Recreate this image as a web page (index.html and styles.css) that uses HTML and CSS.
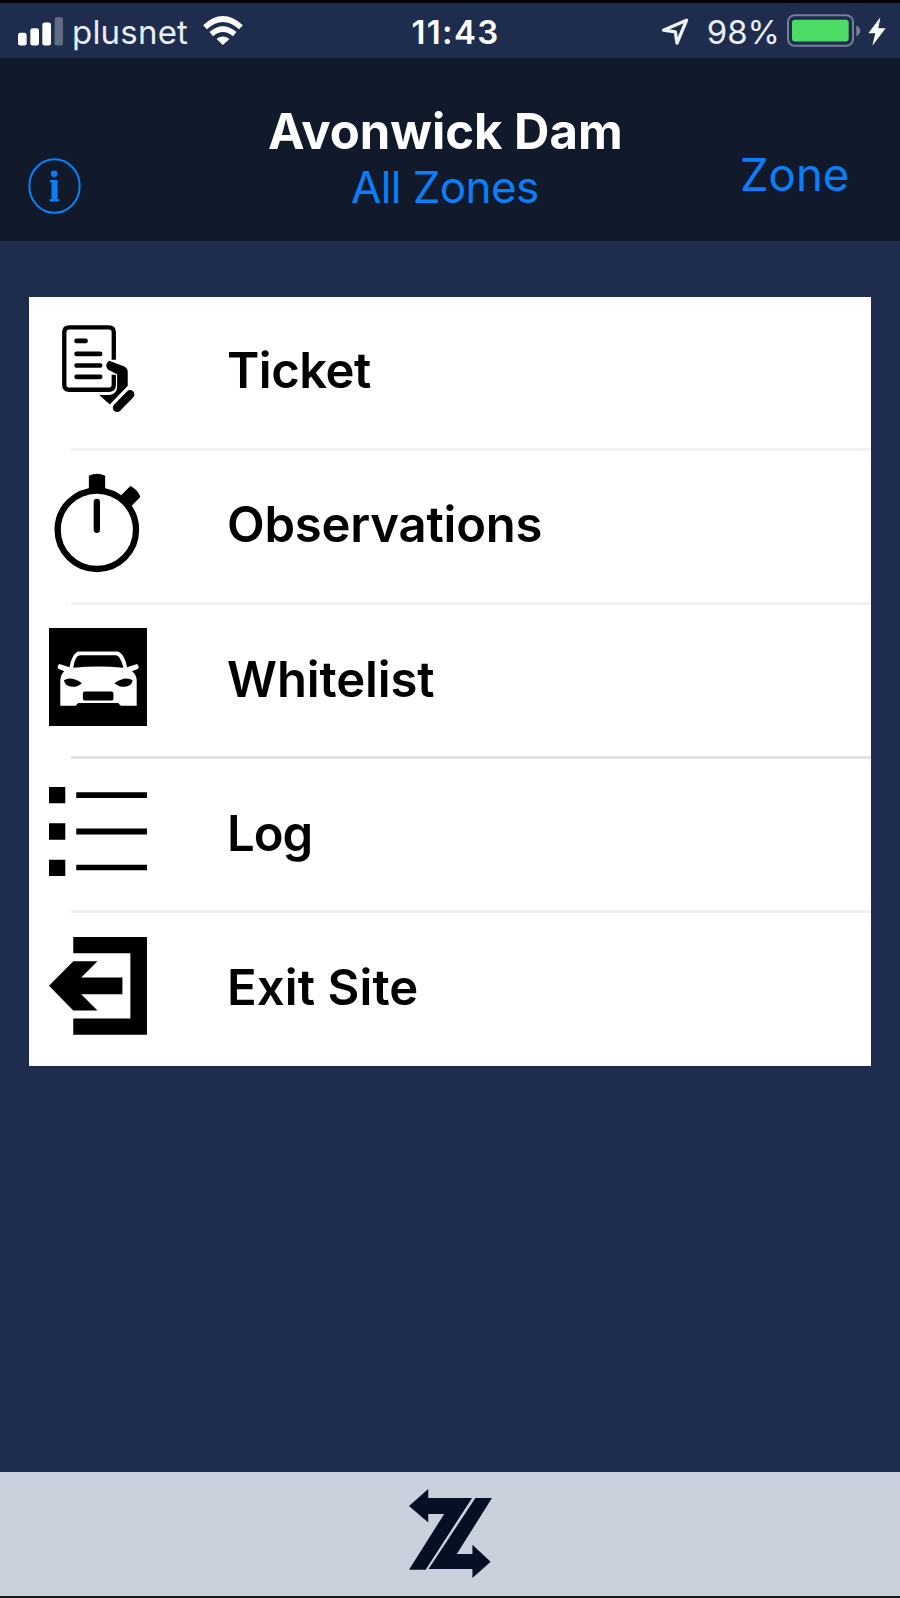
FILE: index.html
```html
<!DOCTYPE html>
<html lang="en">
  <head>
    <meta charset="utf-8">
    <title>Avonwick Dam</title>
    <link rel="stylesheet" href="styles.css">
  </head>
  <body>
    <div class="status">
      <div class="status-left">
        <svg class="signal" viewBox="54 50 135 86">
          <g fill="#fff">
            <rect x="54" y="97" width="26" height="38" rx="7"/>
            <rect x="91" y="83" width="26" height="52" rx="7"/>
            <rect x="127" y="66" width="26" height="69" rx="7"/>
            <rect x="164" y="50" width="25" height="85" rx="7" opacity="0.3"/>
          </g>
        </svg>
        <span class="carrier">plusnet</span>
        <svg class="wifi" viewBox="609 46 121 88">
          <g fill="none" stroke="#fff" stroke-width="17">
            <path d="M615 80Q669 30 724 80"/>
            <path d="M634 101Q669 71 705 101"/>
          </g>
          <path d="M650 116Q669 101 689 116L669 134Z" fill="#fff"/>
        </svg>
      </div>
      <div class="time">11:43</div>
      <div class="status-right">
        <svg class="location" viewBox="64 52 84 82">
          <path d="M71 89L141 59L112 128L107 94Z" fill="none" stroke="#eef1f6" stroke-width="10" stroke-linejoin="round"/>
        </svg>
        <span class="percent">98%</span>
        <svg class="battery" viewBox="442 42 222 98">
          <rect x="445" y="45" width="195" height="92" rx="20" fill="none" stroke="#777f96" stroke-width="6"/>
          <rect x="457" y="59" width="170" height="65" rx="9" fill="#4cdb64"/>
          <path d="M650 76Q662 82 662 92T650 109Z" fill="#777f96"/>
        </svg>
        <svg class="bolt" viewBox="684 50 54 86">
          <path d="M721 50L685 98H706L697 136L737 83H715Z" fill="#fff"/>
        </svg>
      </div>
    </div>

    <header class="header">
      <svg class="info" viewBox="84 475 160 168">
        <ellipse cx="164" cy="559" rx="76" ry="81" fill="none" stroke="#0a7ffb" stroke-width="6"/>
        <circle cx="163" cy="522" r="10" fill="#0a7ffb"/>
        <path d="M150 541H173V599H178V606H149V599H155V548H150Z" fill="#0a7ffb"/>
      </svg>
      <div class="heading">
        <h1 class="title">Avonwick Dam</h1>
        <div class="subtitle">All Zones</div>
      </div>
      <div class="zone">Zone</div>
    </header>

    <main class="main">
      <ul class="menu">
        <li class="item">
          <svg class="icon" viewBox="87 117 295 295">
            <path d="M282 240V157Q282 142 267 142H148Q133 142 133 157V315Q133 330 148 330H267Q282 330 282 315V285" fill="none" stroke="#000" stroke-width="13"/>
            <path d="M170 183H197M170 222H241M170 257H241M170 291H241" stroke="#000" stroke-width="14" stroke-linecap="round"/>
            <path d="M268 243L312 259Q324 264 324 276V318L270 374L238 346H270Q292 342 292 322V283L264 269Q253 254 268 243Z"/>
            <path d="M292 384L331 344" stroke="#000" stroke-width="26" stroke-linecap="round"/>
            <path d="M269 381L325 325" stroke="#fff" stroke-width="4"/>
          </svg>
          <span class="label ticket">Ticket</span>
        </li>
        <li class="item">
          <svg class="icon" viewBox="87 69 295 295">
            <circle cx="231" cy="240" r="118" fill="none" stroke="#000" stroke-width="19"/>
            <path d="M207 77Q231 65 256 77V125H207Z"/>
            <path d="M332 108Q354 119 362 141L332 171L302 138Z"/>
            <path d="M231 156V240" stroke="#000" stroke-width="19" stroke-linecap="round"/>
          </svg>
          <span class="label observations">Observations</span>
        </li>
        <li class="item">
          <svg class="icon" viewBox="87 84 295 295">
            <path d="M87 84H382V379H87Z"/>
            <path d="M149 202C153 180 163 155 178 155H291C307 155 318 180 322 202L352 192Q360 199 355 207L337 214Q350 223 351 242V318H303L295 310H175L167 318H121V242Q122 223 133 214L115 207Q110 199 118 192Z" fill="#fff"/>
            <path d="M160 204Q165 166 181 166H288Q302 166 311 204Q235 196 160 204Z"/>
            <path d="M132 241Q155 228 186 250Q174 261 158 261Q135 259 132 241Z"/>
            <path d="M339 241Q316 228 284 250Q297 261 313 261Q336 259 339 241Z"/>
            <rect x="189" y="275" width="92" height="27" rx="6"/>
          </svg>
          <span class="label whitelist">Whitelist</span>
        </li>
        <li class="item item-dark">
          <svg class="icon" viewBox="87 96 295 295">
            <path d="M87 111H136V160H87ZM87 220H136V270H87ZM87 330H136V379H87Z"/>
            <path d="M169 127H382V144H169ZM169 236H382V254H169ZM169 345H382V362H169Z"/>
          </svg>
          <span class="label log">Log</span>
        </li>
        <li class="item">
          <svg class="icon" viewBox="87 108 295 295">
            <path d="M160 111H382V405H160V356H332V160H160Z"/>
            <path d="M87 258L160 184H233L184 233H308V283H184L233 332H160Z"/>
          </svg>
          <span class="label exit">Exit Site</span>
        </li>
      </ul>
    </main>

    <footer class="footer">
      <svg class="logo" viewBox="87 116 250 268">
        <path d="M87 167L145 116V143H277L137 359H87L193 191H145V217Z"/>
        <path d="M287 143H337L231 312H278V284L333 335L278 384V357H146Z"/>
      </svg>
    </footer>
  </body>
</html>
```
FILE: styles.css
```css
* {
  box-sizing: border-box;
}

body {
  display: flex;
  flex-direction: column;
  height: 1598px;
  margin: 0;
  border-top: 3px solid #000;
  border-bottom: 2px solid #14181f;
  background-color: #1e2d4d;
  font-family: Inter, "Liberation Sans", sans-serif;
}

svg {
  display: block;
  flex: none;
  overflow: visible;
}

.status {
  display: grid;
  grid-template-columns: 1fr auto 1fr;
  height: 55px;
  padding: 0 14px 0 18px;
  color: #e9edf5;
  font-size: 33px;
  line-height: 58px;
}

.status-left,
.status-right {
  display: flex;
}

.status-right {
  justify-content: flex-end;
}

.signal {
  width: 45px;
  height: 29px;
  margin-top: 14px;
}

.carrier {
  margin-left: 9px;
  letter-spacing: 0.2px;
}

.wifi {
  width: 40px;
  height: 29px;
  margin: 13px 0 0 15px;
}

.time {
  padding-left: 7px;
  color: #fff;
  font-weight: 600;
  letter-spacing: 1.3px;
}

.location {
  width: 28px;
  height: 27px;
  margin-top: 15px;
}

.percent {
  margin: 0 7px 0 18px;
}

.battery {
  width: 74px;
  height: 33px;
  margin-top: 11px;
}

.bolt {
  width: 18px;
  height: 29px;
  margin: 14px 0 0 7px;
}

.header {
  display: grid;
  grid-template-columns: 240px 1fr 240px;
  height: 183px;
  padding-left: 28px;
  background-color: #101a2b;
  color: #0a7ffb;
  font-size: 44px;
}

.info {
  width: 53px;
  height: 56px;
  margin-top: 100px;
}

.heading {
  padding-top: 44px;
  white-space: nowrap;
}

.title {
  margin: 0;
  color: #fff;
  font-size: 49px;
  font-weight: 700;
  line-height: 60px;
}

.subtitle {
  margin-left: 83px;
  letter-spacing: -0.6px;
  line-height: 50px;
}

.zone {
  padding-left: 80px;
  font-size: 45.5px;
  line-height: 234px;
}

.main {
  flex: 1;
  padding: 56px 29px 0;
}

.menu {
  margin: 0;
  padding: 0;
  background-color: #fff;
  list-style: none;
}

.item {
  position: relative;
  display: flex;
  height: 154px;
  padding: 26px 0 0 20px;
}

.item:first-child {
  height: 151px;
  padding-top: 22px;
}

.item:nth-child(2) {
  padding-top: 25px;
}

.item:last-child {
  height: 156px;
}

/* Separators start at the inset, not at the card edge */
.item + .item::before {
  position: absolute;
  top: 0;
  right: 0;
  left: 42px;
  height: 3px;
  background-color: #f1f1f1;
  content: "";
}

.item-dark.item-dark::before {
  background-color: #e2e2e2;
}

.icon {
  width: 98px;
  height: 98px;
}

.label {
  margin-left: 80px;
  color: #000;
  font-size: 49px;
  font-weight: 600;
  line-height: 104px;
}

.ticket {
  letter-spacing: -0.5px;
}

.observations {
  letter-spacing: -0.2px;
}

.whitelist {
  letter-spacing: -0.1px;
}

.log {
  letter-spacing: -1px;
}

.exit {
  letter-spacing: 0.1px;
}

.footer {
  display: flex;
  justify-content: center;
  height: 124px;
  padding-top: 17px;
  background-color: #cbd0dd;
}

.logo {
  width: 83px;
  height: 89px;
  fill: #061024;
}
```
